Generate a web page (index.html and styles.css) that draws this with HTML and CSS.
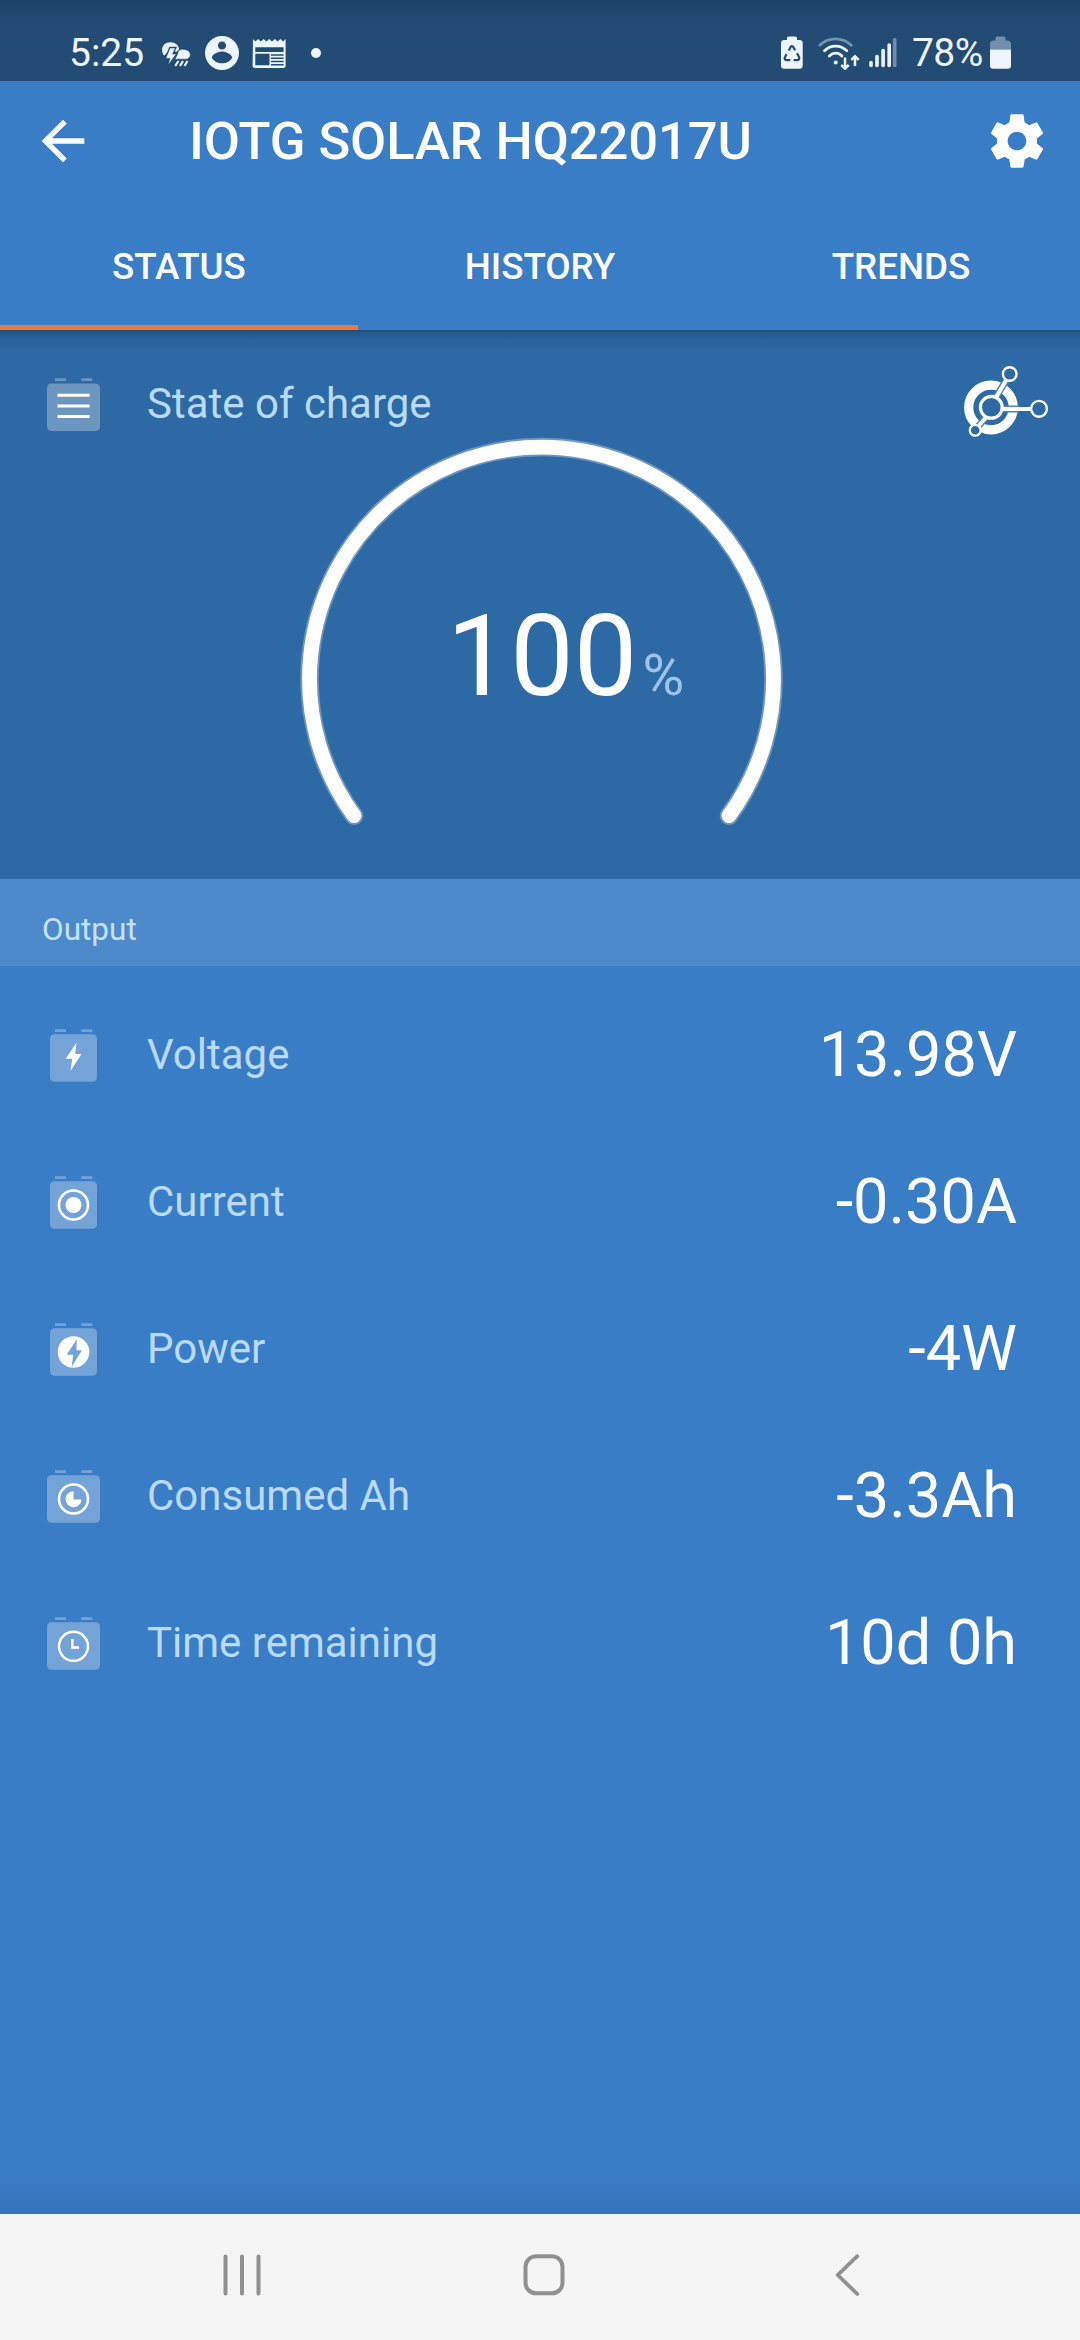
FILE: index.html
```html
<!DOCTYPE html>
<html lang="en">
<head>
<meta charset="utf-8">
<title>IOTG SOLAR HQ22017U</title>
<link rel="stylesheet" href="styles.css">
</head>
<body>
<div class="screen">
  <div class="statusbar">
    <div class="status-left">
      <span class="time">5:25</span>
      <svg class="ic-weather" width="30" height="34" viewBox="161 36 30 34">
        <path d="M163.500 55C160 48 163.500 42.300 170.500 42.300c4.800 0 8 3 8.700 7.200l-3.200 2.500-5-4-6.500 7.500z" fill="#eaf3fc"/>
        <path d="M175 59.200l2.500-5.500c.2-3.300 3-5 5.800-4.300 4 0 7 2.200 7 5.300 0 2.700-2 4.500-4.800 4.500z" fill="#eaf3fc" stroke="#234c75" stroke-width=".6"/>
        <path d="M169.800 47.500h6.200l-2.800 6h4L166.500 68l3-9.200h-4.300z" fill="#eaf3fc" stroke="#234c75" stroke-width="1.300"/>
        <path d="M178.500 61l-3.300 5M183 61l-3 5M187.500 61l-3 5" stroke="#eaf3fc" stroke-width="2.200"/>
      </svg>
      <svg class="ic-person" width="34" height="34" viewBox="2 2 20 20"><path fill="#eef4fb" d="M12 2C6.480 2 2 6.480 2 12s4.480 10 10 10 10-4.480 10-10S17.520 2 12 2zm0 3.200c1.400 0 2.400 1.050 2.400 2.400S13.400 10 12 10 9.600 8.950 9.600 7.600 10.600 5.200 12 5.200zm0 12.900c-2.500 0-4.900-1.200-6-3.500.3-2 4-3.500 6-3.500s5.700 1.500 6 3.500c-1.100 2.300-3.500 3.500-6 3.500z"/></svg>
      <svg class="ic-news" width="34" height="34" viewBox="252 36 34 34">
        <path fill="#eef4fb" fill-rule="evenodd" d="M253 39l2.400 2.400 2.700-2.400 2.700 2.400 2.800-2.400 2.800 2.400 2.800-2.400 2.800 2.400 2.800-2.400 2.800 2.400 2.800-2.400 2.700 2.400 2.500-2.400v26.500q0 2.500-2.500 2.500h-28q-2.500 0-2.500-2.500zM255.300 47.300v4.700h28.300v-4.700zM255.300 53.700v11.500h14.200v-11.500z"/>
        <path d="M271 55h12.600M271 58.300h12.600M271 61.500h12.600M271 64.700h12.600" stroke="#234c75" stroke-width="1.400"/>
      </svg>
      <i class="dot"></i>
    </div>
    <div class="status-right">
      <svg class="ic-eco" width="22" height="34" viewBox="781 36 22 34">
        <path fill="#eef4fb" d="M787 40v-2q0-1.500 1.500-1.500h7q1.500 0 1.500 1.500v2h2.500q3.200 0 3.200 3.200v22.300q0 3.200-3.200 3.200h-15.300q-3.200 0-3.200-3.200v-22.300q0-3.200 3.200-3.200z"/>
        <path d="M788.700 50.500l2.300-4q.9-1 1.900 0l2.200 3.700M797 53.200l2.100 3.900q.7 2.600-1.700 3h-3.800M790.300 60.100h-3.700q-2.700-.4-1.700-3l1.700-3" fill="none" stroke="#234c75" stroke-width="2.200"/>
      </svg>
      <svg class="ic-wifi" width="43" height="34" viewBox="818 36 43 34" fill="none" stroke="#eef4fb" stroke-width="2.800" stroke-linecap="round">
        <path d="M819.800 45.300c8-8.600 23-8.600 31.500 0" stroke="#7493b3"/>
        <path d="M824.500 50.800c6-6.300 16-6.300 22.300 0M829.300 56c4-3.800 9-3.800 12.600 0"/>
        <circle cx="835.700" cy="62.500" r="2" fill="#eef4fb" stroke="none"/>
        <path d="M845 57.500v11M841.300 65l3.700 3.600 3.700-3.600M855 66v-10M851.300 59.800l3.700-3.600 3.700 3.600" stroke-width="2.500" stroke-linecap="butt"/>
      </svg>
      <svg class="ic-signal" width="28" height="34" viewBox="869 36 28 34" stroke="#eef4fb" stroke-width="3.600" stroke-linecap="round">
        <path d="M871 62.500v3M877 56.500v9M883.100 50.500v15M889.200 45v20.500"/>
        <path d="M894.700 39.500v26" stroke="#6f8ead"/>
      </svg>
      <span class="percent">78%</span>
      <svg class="ic-batt" width="22" height="34" viewBox="990 36 22 34">
        <path fill="#7190ae" d="M990 49.500v-5.500q0-3.500 3.500-3.500h2v-2q0-2 1.500-2h7q1.500 0 1.500 2v2h2q3.500 0 3.500 3.500v5.500z"/>
        <path fill="#eef4fb" d="M990 49.500h21v16q0 3.200-3.200 3.200h-14.600q-3.200 0-3.200-3.200z"/>
      </svg>
    </div>
  </div>

  <header class="appbar">
    <div class="titlebar">
      <svg class="back" width="64" height="64" viewBox="0 0 24 24"><path fill="#fff" d="M20 11H7.830l5.590-5.590L12 4l-8 8 8 8 1.410-1.410L7.830 13H20v-2z"/></svg>
      <h1 class="title">IOTG SOLAR HQ22017U</h1>
      <svg class="gear" width="64" height="64" viewBox="0 0 24 24"><path fill="#fff" d="M19.430 12.980c.04-.32.07-.64.07-.98s-.03-.66-.07-.98l2.110-1.650c.19-.15.24-.42.12-.64l-2-3.460c-.12-.22-.39-.3-.61-.22l-2.490 1c-.52-.4-1.080-.73-1.690-.98l-.38-2.650C14.460 2.180 14.250 2 14 2h-4c-.25 0-.46.180-.49.420l-.38 2.650c-.61.250-1.170.590-1.690.980l-2.490-1c-.23-.09-.49 0-.61.220l-2 3.460c-.13.220-.07.490.12.640l2.110 1.650c-.04.320-.07.650-.07.980s.03.660.07.980l-2.110 1.650c-.19.150-.24.420-.12.640l2 3.460c.12.220.39.300.61.220l2.490-1c.52.400 1.080.730 1.690.980l.38 2.650c.03.240.24.420.49.420h4c.25 0 .46-.18.49-.42l.38-2.650c.61-.25 1.170-.59 1.690-.98l2.490 1c.23.090.49 0 .61-.22l2-3.460c.12-.22.070-.49-.12-.64l-2.110-1.650zM12 15.500c-1.930 0-3.500-1.570-3.500-3.500s1.570-3.500 3.500-3.500 3.500 1.570 3.500 3.500-1.570 3.500-3.500 3.500z"/></svg>
    </div>
    <nav class="tabs">
      <a class="tab active">STATUS</a>
      <a class="tab">HISTORY</a>
      <a class="tab">TRENDS</a>
    </nav>
  </header>

  <section class="charge">
    <div class="charge-head">
      <svg class="icon" width="53" height="53" viewBox="0 0 53 53">
        <path class="cell" d="M8 .3h11v2.700h-11zM34.300 .3h11v2.700h-11z"/>
        <rect class="cell" y="5.500" width="53" height="47.500" rx="4.500"/>
        <path d="M10.500 17.300h32M10.500 28h32M10.500 38.500h32" stroke="#fff" stroke-width="3"/>
      </svg>
      <span class="label">State of charge</span>
      <svg class="connect" width="92" height="80" viewBox="960 360 92 80" fill="none">
        <circle cx="991" cy="407.500" r="22.300" stroke="#fff" stroke-width="9.200"/>
        <g stroke="#4f84b8" stroke-width="7">
          <path d="M996 397L1006 380.500M1003 409h16M986.500 417l-8 9"/>
        </g>
        <g stroke="#fff" stroke-width="4">
          <path d="M996 397.500L1006 380.500M1003 409h28M986.500 417l-8 9"/>
        </g>
        <g fill="#2d69a4" stroke="#fff">
          <circle cx="991.300" cy="407.300" r="10.900" stroke-width="3.200"/>
          <circle cx="1009.700" cy="374" r="6.800" stroke-width="2.400"/>
          <circle cx="1039" cy="408.800" r="7.900" stroke-width="2.400"/>
          <circle cx="975.200" cy="430.300" r="5.400" stroke-width="2.200"/>
        </g>
      </svg>
    </div>
    <div class="dial">
      <svg class="arc" width="500" height="400" viewBox="291 430 500 400" fill="none" stroke-linecap="round">
        <path d="M354 815.700A232 232 0 1 1 729 815.700" stroke="#6f96bd" stroke-width="18.500"/>
        <path d="M354 815.700A232 232 0 1 1 729 815.700" stroke="#fff" stroke-width="14.800"/>
      </svg>
      <div class="reading"><span class="amount">100</span><span class="unit">%</span></div>
    </div>
  </section>

  <h2 class="group">Output</h2>

  <main class="rows">
    <div class="row">
      <svg class="icon" width="53" height="53" viewBox="0 0 53 53">
        <path class="cell" d="M8 .3h11v2.700h-11zM34.300 .3h11v2.700h-11z"/>
        <rect class="cell" x="3" y="5.200" width="47" height="47.500" rx="4.500"/>
        <path d="M29.500 13.700L18.700 29.700h6.500L23.500 42 34.500 25h-6.300z" fill="#fff"/>
      </svg>
      <span class="label">Voltage</span><span class="value">13.98V</span>
    </div>
    <div class="row">
      <svg class="icon" width="53" height="53" viewBox="0 0 53 53">
        <path class="cell" d="M8 .3h11v2.700h-11zM34.300 .3h11v2.700h-11z"/>
        <rect class="cell" x="3" y="5.200" width="47" height="47.500" rx="4.500"/>
        <circle cx="26.500" cy="29" r="14.500" fill="none" stroke="#fff" stroke-width="2.500"/>
        <circle cx="26.500" cy="29" r="8" fill="#fff"/>
      </svg>
      <span class="label">Current</span><span class="value">-0.30A</span>
    </div>
    <div class="row">
      <svg class="icon" width="53" height="53" viewBox="0 0 53 53">
        <path class="cell" d="M8 .3h11v2.700h-11zM34.300 .3h11v2.700h-11z"/>
        <rect class="cell" x="3" y="5.200" width="47" height="47.500" rx="4.500"/>
        <circle cx="26.500" cy="29" r="15.800" fill="#fff"/>
        <path d="M29.800 16.300L19.700 31.800h6.500L24.700 43.700 34.900 27.300h-5.500z" fill="#74a4d7"/>
      </svg>
      <span class="label">Power</span><span class="value">-4W</span>
    </div>
    <div class="row">
      <svg class="icon" width="53" height="53" viewBox="0 0 53 53">
        <path class="cell" d="M8 .3h11v2.700h-11zM34.300 .3h11v2.700h-11z"/>
        <rect class="cell" y="5.200" width="53" height="47.500" rx="4.500"/>
        <circle cx="26.500" cy="29" r="14.500" fill="none" stroke="#fff" stroke-width="2.500"/>
        <path d="M26.500 21.200V29.500H34.500A8 8 0 1 1 26.500 21.200z" fill="#fff"/>
      </svg>
      <span class="label">Consumed Ah</span><span class="value">-3.3Ah</span>
    </div>
    <div class="row">
      <svg class="icon" width="53" height="53" viewBox="0 0 53 53">
        <path class="cell" d="M8 .3h11v2.700h-11zM34.300 .3h11v2.700h-11z"/>
        <rect class="cell" y="5.200" width="53" height="47.500" rx="4.500"/>
        <circle cx="26.500" cy="29.300" r="14.500" fill="none" stroke="#fff" stroke-width="2.500"/>
        <path d="M25.300 22v8.500h6.700" fill="none" stroke="#fff" stroke-width="2.500"/>
      </svg>
      <span class="label">Time remaining</span><span class="value">10d 0h</span>
    </div>
  </main>

  <footer class="navbar">
    <svg class="recents" width="42" height="44" viewBox="221 2253 42 44" stroke="#909090" stroke-width="4" stroke-linecap="round"><path d="M225.500 2256.500v37M242 2256.500v37M258.500 2256.500v37"/></svg>
    <svg class="home" width="44" height="44" viewBox="522 2253 44 44"><rect x="525.500" y="2256.300" width="37" height="37" rx="10.500" fill="none" stroke="#909090" stroke-width="4"/></svg>
    <svg class="navback" width="28" height="46" viewBox="834 2252 28 46"><path d="M857.300 2256.200L837.700 2275l19.600 19" fill="none" stroke="#909090" stroke-width="3.800" stroke-linecap="round" stroke-linejoin="round"/></svg>
  </footer>
</div>
</body>
</html>
```
FILE: styles.css
```css
* {
  box-sizing: border-box;
}

body {
  margin: 0;
  font-family: Roboto, "Liberation Sans", sans-serif;
  color: #fff;
}

svg {
  display: block;
  flex: none;
}

.screen {
  display: flex;
  flex-direction: column;
  width: 1080px;
  height: 2340px;
  background: #397dc6;
  overflow: hidden;
}

/* System status bar */
.statusbar {
  display: flex;
  justify-content: space-between;
  height: 81px;
  padding: 25px 68px 0 69px;
  background: linear-gradient(#1f4268, #224a73 24px, #234c75 60px);
  font-size: 39px;
  color: #eef4fb;
}

.status-left,
.status-right {
  display: flex;
  align-items: center;
  height: 56px;
}

.time {
  width: 92px;
}

.ic-person {
  margin-left: 14px;
}

.ic-news {
  margin-left: 13px;
}

.dot {
  width: 10px;
  height: 10px;
  margin-left: 25px;
  border-radius: 50%;
  background: #eef4fb;
}

.ic-wifi {
  margin-left: 15px;
}

.ic-signal {
  margin-left: 8px;
}

.percent {
  width: 78px;
  margin-left: 15px;
  white-space: nowrap;
  letter-spacing: -0.6px;
}

/* App bar and tabs */
.appbar {
  height: 249px;
}

.titlebar {
  display: flex;
  align-items: center;
  height: 120px;
  padding: 0 31px;
}

.title {
  flex: 1;
  margin: 0 0 0 94px;
  font-size: 52.5px;
  font-weight: 500;
  line-height: 120px;
  letter-spacing: -0.1px;
  white-space: nowrap;
}

.tabs {
  display: grid;
  grid-template-columns: repeat(3, 358px);
  column-gap: 3px;
  height: 129px;
}

.tab {
  height: 129px;
  padding-top: 1px;
  border-bottom: 5px solid transparent;
  font-size: 36.75px;
  font-weight: 500;
  line-height: 129px;
  text-align: center;
}

.active {
  border-bottom-color: #e87b40;
}

/* State of charge dial */
.charge {
  display: grid;
  height: 549px;
  background: linear-gradient(#1f4d7b, #265a8f 4px, #2a629a 10px, #2d69a4 22px);
}

.charge-head,
.dial {
  grid-area: 1 / 1;
}

.charge-head {
  display: flex;
  align-items: center;
  height: 148px;
  padding: 0 28px 0 47px;
}

.icon {
  margin-top: 1px;
}

.charge-head .icon {
  margin-top: 0;
}

.cell {
  fill: rgba(255, 255, 255, 0.3);
}

.label {
  flex: 1;
  margin-left: 47px;
  font-size: 42px;
  line-height: 50px;
  color: #b9dafa;
}

.connect {
  align-self: flex-start;
  margin-top: 30px;
}

.dial {
  display: grid;
  justify-items: center;
  padding: 100px 0 0 2px;
}

.arc,
.reading {
  grid-area: 1 / 1;
}

.reading {
  display: flex;
  align-items: baseline;
  margin: 162px 0 0 49px;
  line-height: 130px;
}

.amount {
  font-size: 113px;
}

.unit {
  margin-left: 5px;
  font-size: 57px;
  color: #9dc3ec;
}

/* Readings list */
.group {
  height: 87px;
  margin: 0;
  padding: 14px 42px 0;
  background: #4c8acb;
  font-size: 31.5px;
  font-weight: 400;
  line-height: 73px;
  color: #c5e1fb;
}

.rows {
  flex: 1;
  padding-top: 15px;
  background: linear-gradient(rgba(50, 116, 186, 0), #3475bc) bottom / 100% 36px no-repeat;
}

.row {
  display: flex;
  align-items: center;
  height: 147px;
  padding: 0 63px 0 47px;
}

.value {
  font-size: 63px;
  line-height: 74px;
}

/* System navigation bar */
.navbar {
  display: flex;
  align-items: center;
  height: 126px;
  padding: 0 218px 4px 221px;
  justify-content: space-between;
  background: #f5f5f5;
}

.home {
  margin-left: -10px;
}
```
